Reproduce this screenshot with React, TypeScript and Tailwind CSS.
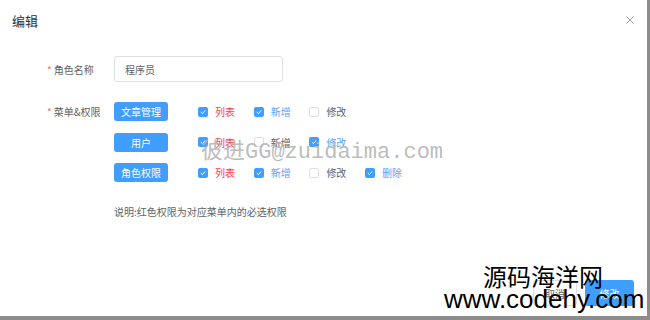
import React from "react";

type Perm = { label: string; checked: boolean; color: "red" | "blue" | "gray" };

const rows: { menu: string; perms: Perm[] }[] = [
  {
    menu: "文章管理",
    perms: [
      { label: "列表", checked: true, color: "red" },
      { label: "新增", checked: true, color: "blue" },
      { label: "修改", checked: false, color: "gray" },
    ],
  },
  {
    menu: "用户",
    perms: [
      { label: "列表", checked: true, color: "red" },
      { label: "新增", checked: false, color: "gray" },
      { label: "修改", checked: true, color: "blue" },
    ],
  },
  {
    menu: "角色权限",
    perms: [
      { label: "列表", checked: true, color: "red" },
      { label: "新增", checked: true, color: "blue" },
      { label: "修改", checked: false, color: "gray" },
      { label: "删除", checked: true, color: "blue" },
    ],
  },
];

function Check({ checked }: { checked: boolean }) {
  if (!checked)
    return <span className="block w-[10px] h-[10px] rounded-[2px] border border-[#dcdfe6] bg-white" />;
  return (
    <span className="flex w-[10px] h-[10px] rounded-[2px] bg-[#409eff] items-center justify-center">
      <svg width="8" height="8" viewBox="0 0 8 8" fill="none">
        <path d="M1.8 4.1 L3.4 5.6 L6.2 2.4" stroke="white" strokeWidth="1" />
      </svg>
    </span>
  );
}

export default function App() {
  const font = { fontFamily: '"Noto Sans CJK SC", "Noto Sans", sans-serif' };
  return (
    <div
      className="relative w-[650px] h-[320px] bg-white overflow-hidden border-r-[3px] border-b-[4px] border-[#8c8c8c] flex flex-col"
      style={font}
    >
      <div className="flex items-center justify-between pl-[12px] pr-[13px] pt-[11px] h-[30px]">
        <span className="text-[13px] text-[#303133]">编辑</span>
        <svg width="8" height="8" viewBox="0 0 8 8" className="mt-[-1px]">
          <path d="M0.5 0.5 L7.5 7.5 M7.5 0.5 L0.5 7.5" stroke="#9aa0a8" strokeWidth="1" />
        </svg>
      </div>

      <div className="flex flex-col pl-[47px] pt-[26px]">
        <div className="flex items-center h-[26px]">
          <div className="w-[67px] text-[10px] text-[#606266] flex items-center">
            <span className="text-[#f56c6c] mr-[2px]">*</span>角色名称
          </div>
          <div className="w-[169px] h-[26px] border border-[#dcdfe6] rounded-[3px] flex items-center pl-[10px] text-[10px] text-[#606266]">
            程序员
          </div>
        </div>

        <div className="flex mt-[20px]">
          <div className="w-[67px] h-[19px] text-[10px] text-[#606266] flex items-center">
            <span className="text-[#f56c6c] mr-[2px]">*</span>菜单&amp;权限
          </div>
          <div className="flex flex-col gap-[11.5px]">
            {rows.map((r) => (
              <div key={r.menu} className="flex items-center h-[19px]">
                <div className="w-[54px] h-[19px] rounded-[3px] bg-[#409eff] text-white text-[10px] flex items-center justify-center">
                  {r.menu}
                </div>
                <div className="flex ml-[30px]">
                  {r.perms.map((p) => (
                    <div key={p.label} className="w-[55.7px] flex items-center gap-[7px]">
                      <Check checked={p.checked} />
                      <span
                        className={
                          "text-[10px] " +
                          (p.color === "red"
                            ? "text-[#ff3b3b]"
                            : p.color === "blue"
                            ? "text-[#5aa5ff]"
                            : "text-[#606266]")
                        }
                      >
                        {p.label}
                      </span>
                    </div>
                  ))}
                </div>
              </div>
            ))}
          </div>
        </div>

        <div className="ml-[67px] mt-[22px] text-[10px] text-[#606266]">说明:红色权限为对应菜单内的必选权限</div>
      </div>

      <div className="flex justify-end items-center gap-[8px] mt-auto mb-[10px] pr-[13px]">
        <div className="w-[44px] h-[26px] rounded-[3px] border border-[#dcdfe6] bg-white text-[10px] text-[#606266] flex items-center justify-center">
          取消
        </div>
        <div className="w-[49px] h-[26px] rounded-[3px] bg-[#409eff] text-white text-[10px] flex items-center justify-center">
          修改
        </div>
      </div>

      <div
        className="absolute left-[201px] top-[140px] text-[22px] leading-[26px] text-[#b4b4b4]/90 whitespace-nowrap"
        style={{ fontFamily: '"Liberation Mono", "Noto Sans CJK SC", monospace' }}
      >
        彼进GG@zuidaima.com
      </div>
      <div
        className="absolute left-[483px] top-[262px] text-[24px] leading-[28px] text-black whitespace-nowrap"
        style={{ fontFamily: '"Noto Sans CJK SC", sans-serif' }}
      >
        源码海洋网
      </div>
      <div
        className="absolute left-[444px] top-[285px] text-[26px] leading-[28px] text-black whitespace-nowrap"
        style={{ fontFamily: '"Liberation Sans", Arial, sans-serif' }}
      >
        www.codehy.com
      </div>
    </div>
  );
}
